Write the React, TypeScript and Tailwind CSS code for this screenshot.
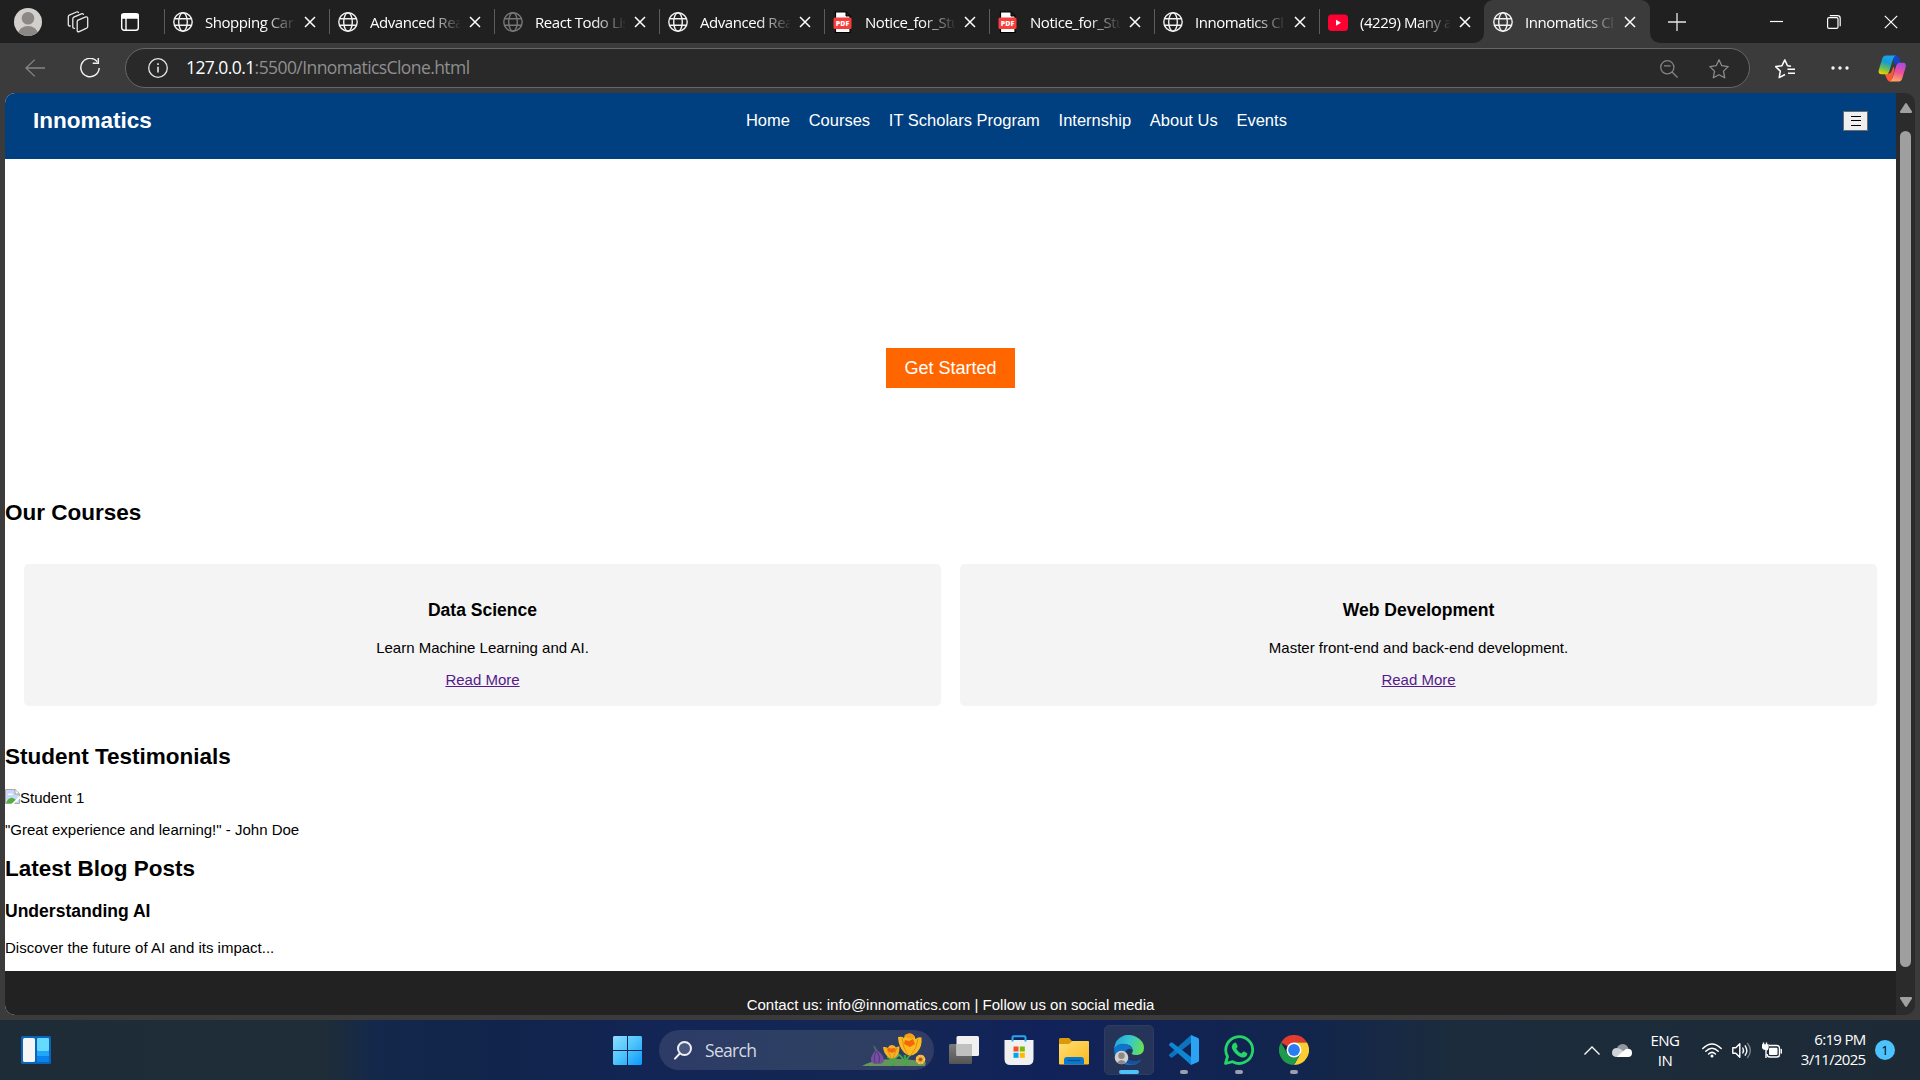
import type { ReactNode } from 'react';

const UI = "font-['Open_Sans','Noto_Sans',sans-serif]";

function Globe({ dim }: { dim?: boolean }) {
  return (
    <svg width="20" height="20" viewBox="0 0 20 20" fill="none" stroke={dim ? '#777777' : '#f2f2f2'} strokeWidth="1.4">
      <circle cx="10" cy="10" r="9.2" />
      <ellipse cx="10" cy="10" rx="4.3" ry="9.2" />
      <path d="M1.6 6.8h16.8M1.6 13.2h16.8" />
    </svg>
  );
}

function Pdf() {
  return (
    <svg width="20" height="26" viewBox="0 0 20 26" className="mt-px">
      <path d="M2.500 3h10.500l4 4v16.500H2.500z" fill="#ffffff" stroke="#000000" strokeWidth="1.200" />
      <path d="M13 3v4h4" fill="#222222" stroke="#000000" />
      <rect x="0.500" y="8.500" width="18" height="11.500" rx="1.500" fill="#f93c3c" />
      <text x="9.500" y="16.900" textAnchor="middle" fontSize="7" fontWeight="800" fill="#ffffff" fontFamily="Open Sans, sans-serif">PDF</text>
    </svg>
  );
}

function Youtube() {
  return (
    <svg width="20" height="20" viewBox="0 0 20 20">
      <rect x="0" y="2.500" width="20" height="16.500" rx="3.500" fill="#ff0033" />
      <path d="M8 7.700v6l5-3z" fill="#ffffff" />
    </svg>
  );
}

const tabs: { title: string; icon: ReactNode; active?: boolean }[] = [
  { title: 'Shopping Car', icon: <Globe /> },
  { title: 'Advanced Rea', icon: <Globe /> },
  { title: 'React Todo Lis', icon: <Globe dim /> },
  { title: 'Advanced Rea', icon: <Globe /> },
  { title: 'Notice_for_Stu', icon: <Pdf /> },
  { title: 'Notice_for_Stu', icon: <Pdf /> },
  { title: 'Innomatics Cl', icon: <Globe /> },
  { title: '(4229) Many a', icon: <Youtube /> },
  { title: 'Innomatics Cl', icon: <Globe />, active: true },
];

function Corner({ flip }: { flip?: boolean }) {
  return (
    <svg width="10" height="10" viewBox="0 0 10 10" className={flip ? 'absolute bottom-0 -right-[10px] -scale-x-100' : 'absolute bottom-0 -left-[10px]'}>
      <path d="M10 0v10H0A10 10 0 0 0 10 0z" fill="#3b3b3b" />
    </svg>
  );
}

function TabStrip() {
  return (
    <div className="flex h-[43px] bg-[#202020]">
      <div className="flex w-[164px] shrink-0 items-center pl-[14px]">
        <svg width="28" height="28" viewBox="0 0 28 28">
          <defs>
            <clipPath id="av"><circle cx="14" cy="14" r="14" /></clipPath>
          </defs>
          <g clipPath="url(#av)">
            <rect width="28" height="28" fill="#d2d0cd" />
            <circle cx="14" cy="10.200" r="6.300" fill="#8b8885" />
            <ellipse cx="14" cy="25.500" rx="9.600" ry="7.500" fill="#8b8885" />
          </g>
        </svg>
        <svg className="ml-[25px]" width="22" height="22" viewBox="0 0 22 22" fill="none" stroke="#e8e8e8" strokeWidth="1.300" strokeLinejoin="round" strokeLinecap="round">
          <path d="M10.500 9.300 18.800 5.900q1.700-.5 1.900 1.200v8.300q0 1.200-1 1.700l-7.500 3.500q-2 .6-2-1.200v-8.700q0-1 .9-1.500z" />
          <path d="M7.500 17.300q-1.700.1-1.700-1.300V8q0-1.300 1-1.800l7.600-3.400q1.600-.5 2 .6" />
          <path d="M3.200 15q-1.900 0-1.900-1.500V5.700q0-1.100 1-1.600L9.500 1q1.600-.6 2 .5" />
        </svg>
        <svg className="ml-[32px]" width="18" height="18" viewBox="0 0 18 18" fill="none" stroke="#ffffff" strokeWidth="1.400">
          <rect x=".7" y=".7" width="16.600" height="16.600" rx="2.500" />
          <path d="M1 1.500h16v3.500H1z" fill="#ffffff" />
          <path d="M5 5v12" />
        </svg>
      </div>
      {tabs.map((t, i) => (
        <div key={i} className={t.active ? 'relative flex w-[166px] shrink-0 items-center rounded-t-[9px] bg-[#3b3b3b]' : 'relative flex w-[165px] shrink-0 items-center'}>
          {t.active ? (
            <>
              <Corner />
              <Corner flip />
            </>
          ) : null}
          <div className={t.active ? 'w-px' : 'h-[25px] w-px bg-[#5c5c5c]'} />
          <div className="ml-2 flex h-[26px] w-5 items-center">{t.icon}</div>
          <div className={`ml-[12px] w-[90px] text-[15px] leading-[40px] tracking-[-0.450px] whitespace-nowrap text-white [mask-image:linear-gradient(to_right,#000_64%,transparent_102%)] ${UI}`}>{t.title}</div>
          <svg className="ml-[9px]" width="12" height="12" viewBox="0 0 12 12" stroke="#ffffff" strokeWidth="1.500">
            <path d="M1 1l10 10M11 1 1 11" />
          </svg>
        </div>
      ))}
      <div className="flex flex-1 items-center pl-[18px]">
        <svg width="18" height="18" viewBox="0 0 18 18" stroke="#e6e6e6" strokeWidth="1.300">
          <path d="M9 0v18M0 9h18" />
        </svg>
        <svg className="ml-[84px]" width="13" height="13" viewBox="0 0 13 13" stroke="#ffffff" strokeWidth="1.200">
          <path d="M0 6.500h13" />
        </svg>
        <svg className="ml-[44px]" width="14" height="14" viewBox="0 0 14 14" fill="none" stroke="#ffffff" strokeWidth="1.200">
          <rect x=".6" y="2.600" width="10.400" height="10.800" rx="1.500" />
          <path d="M2.800.6h7.700q2.700 0 2.700 2.700v8" />
        </svg>
        <svg className="ml-[43px]" width="14" height="14" viewBox="0 0 14 14" stroke="#ffffff" strokeWidth="1.200">
          <path d="M.8.8l12.400 12.400M13.200.8.8 13.200" />
        </svg>
      </div>
    </div>
  );
}

function Toolbar() {
  return (
    <div className="flex h-[50px] items-center bg-[#3b3b3b] pl-[25px]">
      <svg width="20" height="18" viewBox="0 0 20 18" fill="none" stroke="#858585" strokeWidth="1.300">
        <path d="M20 9H1M9.800.6 1 9l8.800 8.400" />
      </svg>
      <svg className="ml-[35px]" width="20" height="20" viewBox="0 0 20 20" fill="none" stroke="#f0f0f0" strokeWidth="1.500">
        <path d="M17.200 3.800A9.200 9.200 0 1 0 19.200 10" />
        <path d="M18.300 0v5.300h-5.600" />
      </svg>
      <div className="ml-[25px] flex h-[40px] w-[1625px] items-center rounded-full border border-[#676767] bg-[#292929] pl-[22px]">
        <svg width="20" height="20" viewBox="0 0 20 20" fill="none" stroke="#e6e6e6" strokeWidth="1.300">
          <circle cx="10" cy="10" r="9.300" />
          <path d="M10 8.800v5.700M10 5.200v1.800" strokeWidth="1.600" />
        </svg>
        <div className={`-mt-[2px] ml-[18px] w-[1474px] text-[17.500px] tracking-[-0.580px] text-[#8f8f8f] ${UI}`}>
          <span className="text-white">127.0.0.1</span>:5500/InnomaticsClone.html
        </div>
        <svg className="mt-px" width="18" height="18" viewBox="0 0 18 18" fill="none" stroke="#858585" strokeWidth="1.300">
          <circle cx="7.300" cy="7.300" r="6.600" />
          <path d="M4 5.800h6.600M12 12l5.600 5.600" />
        </svg>
        <svg className="mt-[2px] ml-[31px]" width="20" height="20" viewBox="0 0 20 20" fill="none" stroke="#8c8c8c" strokeWidth="1.300" strokeLinejoin="round">
          <path d="M10 .8l2.800 5.900 6.400.9-4.700 4.500 1.200 6.700L10 15.700l-5.700 3.100 1.200-6.700L.8 7.600l6.400-.9z" />
        </svg>
      </div>
      <svg className="mt-px ml-[25px]" width="20" height="20" viewBox="0 0 20 20" fill="none" stroke="#ffffff" strokeWidth="1.400" strokeLinejoin="round">
        <path d="M16 7.300l-3.500-.6L9.800.9 7 6.700l-6.300.9 4.600 4.500L4.200 18.600 10 15.500M12.500 10.200H20M13 14.300h7" strokeWidth="1.500" />
      </svg>
      <svg className="ml-[36px]" width="18" height="4" viewBox="0 0 18 4" fill="#f5f5f5">
        <circle cx="2" cy="2" r="1.700" />
        <circle cx="9" cy="2" r="1.700" />
        <circle cx="16" cy="2" r="1.700" />
      </svg>
      <svg className="ml-[29px]" width="29" height="27" viewBox="0 0 29 27">
        <defs>
          <linearGradient id="cpl" x1="0.500" y1="0" x2="0.200" y2="1">
            <stop offset="0" stopColor="#1aa2ee" />
            <stop offset=".35" stopColor="#199bd0" />
            <stop offset=".7" stopColor="#6fc04c" />
            <stop offset="1" stopColor="#f7d000" />
          </linearGradient>
          <linearGradient id="cpr" x1="0.600" y1="0" x2="0.400" y2="1">
            <stop offset="0" stopColor="#a54ae8" />
            <stop offset=".5" stopColor="#ef5097" />
            <stop offset="1" stopColor="#ffab5c" />
          </linearGradient>
        </defs>
        <path d="M14.500.5h3.800q2 0 2.800 2.500l1.500 5h-3.500q-2 0-2.700 2z" fill="#1246c8" />
        <path d="M6.500 18.500h4.500q1.800 0 2.500-2l2-5 1 3-3 12q-3 .5-4-1.500z" fill="#f85a36" />
        <path d="M8 .5h10q-2 .5-2.800 3l-4 13q-.8 2.700-3.200 2.700H3.500q-4 0-2.500-5l3.200-10.500Q5.300.5 8 .5z" fill="url(#cpl)" />
        <path d="M21 26.500H11.500q2-.5 2.800-3l4-13q.8-2.700 3.200-2.700h3.500q4 0 2.500 5l-3.200 10.500Q23.200 26.500 21 26.500z" fill="url(#cpr)" />
      </svg>
    </div>
  );
}

const navItems = ['Home', 'Courses', 'IT Scholars Program', 'Internship', 'About Us', 'Events'];

const courses = [
  { name: 'Data Science', text: 'Learn Machine Learning and AI.' },
  { name: 'Web Development', text: 'Master front-end and back-end development.' },
];

function Site() {
  return (
    <div className="flex h-[922px] w-[1891px] flex-col overflow-hidden rounded-tl-[10px] rounded-bl-[10px] bg-white font-['Liberation_Sans',Arial,sans-serif] text-[15px] text-black">
      <header className="flex h-[66px] shrink-0 items-start justify-between bg-[#004080] px-[28px] pt-[12px] text-white">
        <div className="pt-px text-[22.500px] leading-[30px] font-bold">Innomatics</div>
        <nav className="ml-[38px] flex gap-[18.750px] text-[16.500px] leading-[30px]">
          {navItems.map((n) => (
            <a key={n}>{n}</a>
          ))}
        </nav>
        <button className="mt-[6px] flex h-5 w-[25px] items-center justify-center border border-[#6b6b6b] bg-[#efefef]">
          <svg className="ml-px" width="10" height="10" viewBox="0 0 10 10" stroke="#000000" strokeWidth="1">
            <path d="M0 .5h10M0 4.500h10M0 9.500h10" />
          </svg>
        </button>
      </header>
      <div className="flex h-[338px] shrink-0 justify-center pt-[189px]">
        <button className="h-[40px] w-[129px] bg-[#ff6600] text-[18px] leading-[39px] text-white">Get Started</button>
      </div>
      <h2 className="h-[67px] shrink-0 pt-px text-[22.500px] leading-[30px] font-bold">Our Courses</h2>
      <div className="flex h-[142px] shrink-0 gap-[19px] px-[19px]">
        {courses.map((c) => (
          <div key={c.name} className="flex flex-1 flex-col items-center rounded-[5px] bg-[#f4f4f4] pt-[36px]">
            <h3 className="text-[17.550px] leading-[20px] font-bold">{c.name}</h3>
            <p className="mt-[18px] leading-[20px]">{c.text}</p>
            <a className="mt-[12px] leading-[20px] text-[#551a8b] underline">Read More</a>
          </div>
        ))}
      </div>
      <h2 className="mt-[36px] shrink-0 text-[22.500px] leading-[30px] font-bold">Student Testimonials</h2>
      <div className="mt-[16px] flex h-[20px] shrink-0 items-center leading-[20px]">
        <svg className="mb-[4px]" width="15" height="15" viewBox="0 0 15 15">
          <path d="M.5.500h9.700l4.300 4.300v9.700H.5z" fill="#c8d8f8" stroke="#a8a8a8" />
          <path d="M2.500 6q1-2 3-1.300Q7 3.500 8 6z" fill="#ffffff" />
          <path d="M1 14l2-3.500q3-2.500 5.500-1.300L11 11v3z" fill="#53ae3c" />
          <path d="M10 .8V5h4.200" fill="#ffffff" stroke="#a0a0a0" />
          <path d="M15 6.500 6.500 15H9l6-5.500z" fill="#ffffff" />
        </svg>
        <span>Student 1</span>
      </div>
      <p className="mt-[12px] shrink-0 leading-[20px]">"Great experience and learning!" - John Doe</p>
      <h2 className="mt-[14px] shrink-0 text-[22.500px] leading-[30px] font-bold">Latest Blog Posts</h2>
      <h3 className="mt-[17px] shrink-0 text-[17.550px] leading-[20px] font-bold">Understanding AI</h3>
      <p className="mt-[17px] shrink-0 leading-[20px]">Discover the future of AI and its impact...</p>
      <footer className="mt-[13px] flex-1 bg-[#222222] pt-[24px] text-center leading-[20px] text-white">
        Contact us: info@innomatics.com | Follow us on social media
      </footer>
    </div>
  );
}

function Scrollbar() {
  return (
    <div className="flex h-[922px] w-[19px] flex-col items-center rounded-r-[10px] bg-[#2b2b2b] pt-[10px]">
      <svg width="12" height="10" viewBox="0 0 12 10" fill="#a0a0a0">
        <path d="M5 .8q1-1.400 2 0l5 7.700q.4 1.500-1 1.500H1Q-.4 10 0 8.500z" />
      </svg>
      <div className="mt-[18px] h-[836px] w-[11px] rounded-full bg-[#9f9f9f]" />
      <svg className="mt-[30px] rotate-180" width="12" height="10" viewBox="0 0 12 10" fill="#a0a0a0">
        <path d="M5 .8q1-1.400 2 0l5 7.700q.4 1.500-1 1.500H1Q-.4 10 0 8.500z" />
      </svg>
    </div>
  );
}

function AppButton({ children, mark }: { children: ReactNode; mark?: 'idle' | 'active' }) {
  return (
    <div className={mark === 'active' ? 'relative flex h-[50px] w-[50px] items-center justify-center rounded-[5px] border border-[#2f3c62] bg-[#26345a]' : 'relative flex h-[50px] w-[50px] items-center justify-center'}>
      {children}
      {mark === 'active' ? <div className="absolute bottom-0 h-1 w-5 rounded-full bg-[#4cc2ff]" /> : null}
      {mark === 'idle' ? <div className="absolute bottom-px h-1 w-2 rounded-full bg-[#9a9fb0]" /> : null}
    </div>
  );
}

function Flowers() {
  return (
    <svg width="66" height="34" viewBox="0 0 66 34">
      <path d="M0 33q8-5 22-6.500 24-2 42 3l-1 3.500z" fill="#65975a" />
      <path d="M14 18Q11 15 11.500 12q2.500 2 3.500 6z" fill="#3f7c46" />
      <path d="M14 16q8 6 8 11 0 4.500-8 4-6-.5-5-6 1-3 5-9z" fill="#76509f" />
      <path d="M14 18q-3 6-1 12M15 18q4 6 2 12" stroke="#54367c" fill="none" />
      <path d="M31 24v9M43 22v11" stroke="#3d9e48" strokeWidth="2.500" />
      <path d="M25 24q6 2 6 8 0-6 6-10M36 21q6 4 7 11 0-7 11-15" stroke="#45a94d" strokeWidth="1.800" fill="none" />
      <path d="M21 14q3-.5 5 1 1-3 4-3t4 2.500q1.500-1.500 3.500-1 0 7-3 10-4 4-8.500.5Q21.500 20 21 14z" fill="#f5b223" />
      <path d="M36 4q4-1 6 1 1-4 5.500-4.500Q52 1 53.500 6q3-2.500 6-1.500 1 9-4.500 15-7 6-13 0-5.500-6-6-15.500z" fill="#fbbb20" />
      <path d="M40 5q1 10 6 17M56 6q-1 9-7 16M25 15l4 10M35 15l-4 10" stroke="#df8c0d" strokeWidth=".9" fill="none" />
      <path d="M42 3q2-3 5.500-2.500Q51 0 53 4q-5 4-11-1z" fill="#f3a012" />
      <path d="M43 7l4 1 4-2 2 5-5 3-6-3zM26 15l3.500.5L33 15l1 3-4 2-4.500-2z" fill="#f2680c" />
      <circle cx="58.500" cy="26.500" r="4.800" fill="#e9a43a" />
      <circle cx="58.500" cy="26.500" r="3.700" fill="none" stroke="#f7c35a" strokeWidth="2" strokeDasharray="2 1" />
      <circle cx="58.500" cy="26.500" r="1.800" fill="#a85b12" />
    </svg>
  );
}

function Taskbar() {
  return (
    <div className={`flex h-[60px] items-center bg-[linear-gradient(90deg,#1e2c38_0px,#1f2d38_325px,#13284b_375px,#11244b_500px,#122554_640px,#142654_900px,#11225a_1040px,#11254d_1300px,#1c2c3c_1460px,#1d2a36_1920px)] text-white ${UI}`}>
      <svg className="ml-[21px]" width="30" height="28" viewBox="0 0 30 28">
        <rect width="30" height="28" rx="1.500" fill="#0b64b8" />
        <rect x="2" y="2" width="12" height="24" rx="1.500" fill="#f5f5f5" />
        <rect x="16" y="2" width="12" height="13" rx="1" fill="#66d9ff" />
        <rect x="16" y="15" width="12" height="5" fill="#22a7f8" />
        <rect x="16" y="20" width="12" height="6" rx="1" fill="#0a84ec" />
      </svg>
      <svg className="ml-[562px]" width="29" height="29" viewBox="0 0 29 29">
        <defs>
          <linearGradient id="win" x1="0" y1="0" x2="1" y2="1">
            <stop offset="0" stopColor="#8fdcff" />
            <stop offset=".5" stopColor="#4cc4fb" />
            <stop offset="1" stopColor="#0a98fb" />
          </linearGradient>
        </defs>
        <path d="M1 0h13v14H0V1zM15 0h13l1 1v13H15zM0 15h14v14H1l-1-1zM15 15h14v13l-1 1H15z" fill="url(#win)" />
      </svg>
      <div className="ml-[17px] flex h-[40px] w-[275px] items-center rounded-full bg-[linear-gradient(90deg,#2d3b67,#2d4062_60%,#303c66)] pl-[15px]">
        <svg width="18" height="19" viewBox="0 0 18 19" fill="none" stroke="#f0f0f4" strokeWidth="2" strokeLinecap="round">
          <circle cx="10.500" cy="7.500" r="6.500" fill="#4a5880" />
          <path d="M5.800 12.500 1 17.600" />
        </svg>
        <div className="ml-[13px] w-[157px] text-[17.500px] tracking-[-0.700px] text-[#d5d9e2]">Search</div>
        <Flowers />
      </div>
      <div className="ml-[5px] flex gap-[5px]">
        <AppButton>
          <svg width="30" height="28" viewBox="0 0 30 28">
            <defs>
              <linearGradient id="tv" x1="0" y1="0" x2="0" y2="1">
                <stop offset="0" stopColor="#7b7b7b" />
                <stop offset="1" stopColor="#555555" />
              </linearGradient>
            </defs>
            <rect x="0" y="8" width="23" height="20" rx="1.500" fill="url(#tv)" />
            <rect x="7.500" y="0" width="22.500" height="20" rx="1.500" fill="#f0f0f0" />
            <rect x="7.500" y="8" width="15.500" height="12" fill="#c0c0c0" />
          </svg>
        </AppButton>
        <AppButton>
          <svg width="30" height="30" viewBox="0 0 30 30">
            <path d="M.5 5h29v19q0 6-6 6h-17q-6 0-6-6z" fill="#f0f0f0" />
            <path d="M8.500 6.500V2.500q0-1.300 1.300-1.300h10.400q1.300 0 1.300 1.300v4" fill="none" stroke="#25a9ee" strokeWidth="2" />
            <rect x="9.500" y="11.500" width="5" height="5" fill="#f25022" />
            <rect x="15.800" y="11.500" width="5" height="5" fill="#7fba00" />
            <rect x="9.500" y="17.800" width="5" height="5" fill="#00a4ef" />
            <rect x="15.800" y="17.800" width="5" height="5" fill="#ffb900" />
          </svg>
        </AppButton>
        <AppButton>
          <svg className="mt-[2px]" width="30" height="27" viewBox="0 0 30 27">
            <defs>
              <linearGradient id="fold" x1="0" y1="0" x2="1" y2="1">
                <stop offset="0" stopColor="#ffdf74" />
                <stop offset="1" stopColor="#fbb91d" />
              </linearGradient>
            </defs>
            <path d="M0 1.500Q0 0 1.500 0H10l3 3h7v6H0z" fill="#dc9a0a" />
            <path d="M0 6h10l3.500-3H29q1 0 1 1v21.500q0 1-1 1H1q-1 0-1-1z" fill="url(#fold)" />
            <path d="M5 26.500V22q0-3 3-3h14q3 0 3 3v4.500z" fill="#0b78cf" />
            <path d="M8.500 22.500h13" stroke="#064f94" strokeWidth="1.200" />
          </svg>
        </AppButton>
        <AppButton mark="active">
          <svg width="30" height="30" viewBox="0 0 30 30">
            <defs>
              <linearGradient id="edg" x1="0" y1=".3" x2="1" y2=".5">
                <stop offset="0" stopColor="#22a6dc" />
                <stop offset=".5" stopColor="#37c6cf" />
                <stop offset="1" stopColor="#66e054" />
              </linearGradient>
            </defs>
            <path d="M0 14Q1 4 9 1q6-2.500 13 .8Q30 6 30 13q0 6-6.500 7-5 .3-6-1.500 2-1.500 1-4.500-1.500-4.500-7-4.800Q4 9 0 14z" fill="url(#edg)" />
            <path d="M0 14q3-5.500 9.500-5.200 7.500.2 8.500 5.700-4-2-6 1.500-1.500 8 6 10.200 4 1 9.500-1.700-5 7.500-15 5.300Q0 27 0 14z" fill="#0f73c9" />
            <path d="M12 16q-1.500 8 6 10.200 4 1 9.500-1.700-4 5-9.500 5.300-9-2-9-8.300 0-3 3-5.500z" fill="#17509c" />
            <circle cx="7.500" cy="22.500" r="6.800" fill="#d2d0cd" />
            <circle cx="7.500" cy="20.700" r="3.200" fill="#8b8885" />
            <path d="M3 27.400q4.500-5 9 0-4.500 3.500-9 0z" fill="#8b8885" />
          </svg>
        </AppButton>
        <AppButton mark="idle">
          <svg width="30" height="30" viewBox="0 0 30 30">
            <path d="M22 0 0 19.700q-.4.800.3 1.300l1.600 1.400q.7.400 1.400 0L22 8z" fill="#0a74bd" />
            <path d="M22 30 0 10.300q-.4-.8.300-1.300l1.600-1.400q.7-.4 1.400 0L22 22z" fill="#0e86d2" />
            <path d="M22 0l7 3q1 .5 1 1.700v20.600q0 1.200-1 1.700l-7 3z" fill="#2ba3f5" />
          </svg>
        </AppButton>
        <AppButton mark="idle">
          <svg width="30" height="30" viewBox="0 0 30 30">
            <path d="M1.500 28.500l2-7A13.400 13.400 0 1 1 8.700 26.700z" fill="none" stroke="#25d366" strokeWidth="2.800" strokeLinejoin="round" />
            <path d="M10 8q1.500-1.300 2.300.3l1.200 2.700q.3.900-.4 1.700l-.9 1q2 3.500 5.300 4.700l1.300-1.500q.6-.7 1.500-.3l2.500 1.300q.8.500.5 1.500-1 3-4.300 3-3.500-.2-7.500-4-4-4.300-3.700-7 .2-2 2.200-3.400z" fill="#25d366" />
          </svg>
        </AppButton>
        <AppButton mark="idle">
          <svg width="30" height="30" viewBox="0 0 30 30">
            <path d="M15 15 2 7.500A15 15 0 0 1 28 7.500H15z" fill="#e33b2e" />
            <path d="M15 7.500h13A15 15 0 0 1 15 30l6.500-11.200z" fill="#fccd30" />
            <path d="M2 7.500 8.500 18.800Q12 23 21.500 18.800L15 30A15 15 0 0 1 2 7.500z" fill="#1f9a4c" />
            <circle cx="15" cy="15" r="7.500" fill="#ffffff" />
            <circle cx="15" cy="15" r="5.900" fill="#2b7cf0" />
          </svg>
        </AppButton>
      </div>
      <div className="ml-[265px] flex items-center">
        <svg width="16" height="9" viewBox="0 0 16 9" fill="none" stroke="#ffffff" strokeWidth="1.300">
          <path d="M.5 8.500 8 1l7.500 7.500" />
        </svg>
        <svg className="ml-[12px]" width="20" height="13" viewBox="0 0 20 13">
          <path d="M5 3.500Q7 0 11 0q4 .3 5.500 4.500L11 8z" fill="#8f979e" />
          <path d="M0 9q0-5 5-5 3 0 7 4l-8 5Q0 12.500 0 9z" fill="#cfd3d6" />
          <path d="M4 13 14 5q6-1 6 4 0 4-4 4z" fill="#ffffff" />
        </svg>
        <div className="ml-[15px] w-[36px] text-center text-[15px] leading-[20px] tracking-[-0.500px]">
          <div>ENG</div>
          <div>IN</div>
        </div>
        <svg className="ml-[19px]" width="20" height="15" viewBox="0 0 20 15" fill="none" stroke="#ffffff" strokeWidth="1.500" strokeLinecap="round">
          <path d="M.8 5.500q9.200-9 18.400 0M3.800 8.300q6.200-6 12.400 0M6.600 11q3.400-3.200 6.800 0" />
          <circle cx="10" cy="13" r="1.500" fill="#ffffff" stroke="none" />
        </svg>
        <svg className="ml-[10px]" width="20" height="17" viewBox="0 0 20 17" fill="none" stroke="#ffffff" strokeWidth="1.400" strokeLinejoin="round" strokeLinecap="round">
          <path d="M.8 5.800h3l4-4v13.400l-4-4h-3z" />
          <path d="M10.800 6q1.500 2.500 0 5M13.200 3.800q3.200 4.700 0 9.400" />
          <path d="M15.600 1.500q5.500 7 0 14" stroke="#75808a" />
        </svg>
        <svg className="ml-[10px]" width="20" height="17" viewBox="0 0 20 17" fill="none" stroke="#ffffff" strokeWidth="1.400">
          <path d="M7 3.500h8q2.500 0 2.500 2.500v6.500q0 2.500-2.500 2.500H8q-3 0-3-3" />
          <rect x="7" y="5.700" width="8.500" height="7.200" rx="1" fill="#ffffff" stroke="none" />
          <path d="M19.300 7.500v3.500" strokeLinecap="round" />
          <path d="M0 3h6v2.500q0 2-2 2.700V16M1.500.5V3M4.500.5V3" />
          <path d="M0 3h6v3q-1 2-3 2T0 6z" fill="#ffffff" stroke="none" />
        </svg>
        <div className="mb-[2px] w-[83.500px] text-right text-[15px] leading-[20.500px] tracking-[-0.700px] whitespace-nowrap">
          <div>6:19 PM</div>
          <div>3/11/2025</div>
        </div>
        <div className="ml-[9.500px] h-[20px] w-[20px] rounded-full bg-[#4cc2ff] text-center text-[13px] leading-[20px] text-black">1</div>
      </div>
    </div>
  );
}

export default function App() {
  return (
    <div className="h-[1080px] w-[1920px] overflow-hidden bg-[#3b3b3b]">
      <TabStrip />
      <Toolbar />
      <div className="flex h-[927px] pl-[5px]">
        <Site />
        <Scrollbar />
      </div>
      <Taskbar />
    </div>
  );
}
